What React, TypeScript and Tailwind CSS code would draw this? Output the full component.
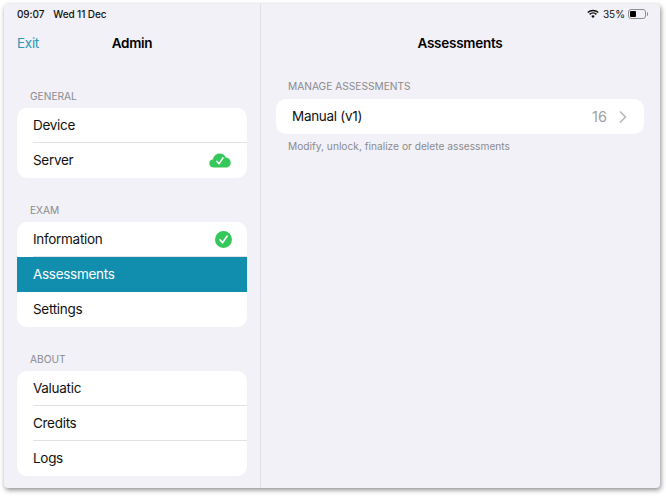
import { ChevronRight } from "lucide-react";

function CloudCheck() {
  return (
    <svg width="22" height="15" viewBox="0 0 22 15">
      <path
        d="M5 14.5C2.2 14.5 0.3 12.7 0.3 10.4C0.3 8.2 1.9 6.6 4 6.3C4.6 2.9 7.4 0.5 10.8 0.5C13.6 0.5 15.8 2.1 16.9 4.6C19.7 4.8 21.7 7 21.7 9.7C21.7 12.5 19.5 14.5 16.7 14.5Z"
        fill="#34c759"
      />
      <path d="M7.8 8.2L10 10.8L14 4.8" fill="none" stroke="white" strokeWidth="1.5" strokeLinecap="round" strokeLinejoin="round" />
    </svg>
  );
}

function CircleCheck() {
  return (
    <svg width="17" height="17" viewBox="0 0 17 17" className="mr-[-1px]">
      <circle cx="8.5" cy="8.5" r="8.5" fill="#34c759" />
      <path d="M5 8.8L7.5 11.8L12 5.2" fill="none" stroke="white" strokeWidth="1.7" strokeLinecap="round" strokeLinejoin="round" />
    </svg>
  );
}

function Wifi() {
  return (
    <svg width="12" height="10" viewBox="0 0 13 10">
      <path d="M0.8 3.4C4 0.4 9 0.4 12.2 3.4" fill="none" stroke="#111" strokeWidth="1.6" />
      <path d="M2.8 5.4C4.9 3.5 8.1 3.5 10.2 5.4" fill="none" stroke="#111" strokeWidth="1.6" />
      <path d="M4.6 7.2L6.5 9.6L8.4 7.2C7.3 6.2 5.7 6.2 4.6 7.2Z" fill="#111" />
    </svg>
  );
}

function Battery() {
  return (
    <div className="flex items-center">
      <div className="h-[10px] w-[18px] rounded-[3px] border border-[#8e8e93] p-[1px]">
        <div className="h-full w-[6px] rounded-[1px] bg-black" />
      </div>
      <div className="ml-[0.5px] h-[4px] w-[1.5px] rounded-r-sm bg-[#8e8e93]" />
    </div>
  );
}

type RowProps = {
  label: string;
  active?: boolean;
  last?: boolean;
  icon?: React.ReactNode;
};

function Row({ label, active, last, icon }: RowProps) {
  return (
    <div className={`pl-4 ${active ? "bg-[#118eae] text-white" : "text-[#111]"}`}>
      <div className={`flex h-[35px] items-center justify-between pr-4 ${!last && !active ? "border-b border-[#e2e2e6]" : ""}`}>
        <span className="text-[13.5px] tracking-[-0.3px]">{label}</span>
        {icon}
      </div>
    </div>
  );
}

function Section({ title, children, className }: { title: string; children: React.ReactNode; className?: string }) {
  return (
    <div className={className}>
      <div className="mb-[5px] pl-[13px] text-[10.2px] leading-[13px] text-[#8a8a8e]">{title}</div>
      <div className="overflow-hidden rounded-[10px] bg-white">{children}</div>
    </div>
  );
}

export default function App() {
  return (
    <div className="h-[496px] w-[666px] bg-white pl-1 pt-1" style={{ fontFamily: "Inter, 'Noto Sans', sans-serif" }}>
      <div className="flex h-[484px] w-[656px] overflow-hidden rounded-[4px] bg-[#f2f1f7] shadow-[1px_2px_5px_rgba(0,0,0,0.45)]">
        {/* sidebar */}
        <aside className="w-[257px] shrink-0 border-r border-[#e0e0e4] pl-[13px] pr-[13px]">
          <div className="flex h-[20px] items-center gap-[9px] text-[10px] font-medium tracking-[-0.1px] text-[#111]">
            <span>09:07</span>
            <span>Wed 11 Dec</span>
          </div>
          <div className="relative flex h-[39px] items-center justify-center">
            <span className="absolute left-0 text-[13.5px] tracking-[-0.3px] text-[#2c98b5]">Exit</span>
            <span className="text-[13.5px] font-semibold tracking-[-0.3px] text-black">Admin</span>
          </div>
          <Section title="GENERAL" className="mt-[27px]">
            <Row label="Device" />
            <Row label="Server" last icon={<CloudCheck />} />
          </Section>
          <Section title="EXAM" className="mt-[26px]">
            <Row label="Information" icon={<CircleCheck />} />
            <Row label="Assessments" active />
            <Row label="Settings" last />
          </Section>
          <Section title="ABOUT" className="mt-[26px]">
            <Row label="Valuatic" />
            <Row label="Credits" />
            <Row label="Logs" last />
          </Section>
        </aside>

        {/* detail */}
        <main className="flex-1 pl-[15px] pr-[16px]">
          <div className="mr-[-4px] flex h-[20px] items-center justify-end gap-[3px] text-[10px] text-[#111]">
            <Wifi />
            <span className="ml-[1px]">35%</span>
            <Battery />
          </div>
          <div className="flex h-[39px] items-center justify-center text-[13.5px] font-semibold tracking-[-0.25px] text-black">Assessments</div>
          <div className="mt-[17px] pl-[12px] text-[10.2px] leading-[13px] text-[#8a8a8e]">MANAGE ASSESSMENTS</div>
          <div className="mt-[6px] flex h-[35px] items-center justify-between rounded-[10px] bg-white pl-4 pr-[11px]">
            <span className="text-[13.5px] tracking-[-0.3px] text-[#111]">Manual (v1)</span>
            <div className="flex items-center gap-[6px] text-[#a2a2a6]">
              <span className="text-[14.5px]">16</span>
              <ChevronRight size={20} strokeWidth={2} className="text-[#b8b8bc]" />
            </div>
          </div>
          <div className="mt-[6px] pl-[12px] text-[10.2px] leading-[13px] text-[#8a8a8e]">Modify, unlock, finalize or delete assessments</div>
        </main>
      </div>
    </div>
  );
}
